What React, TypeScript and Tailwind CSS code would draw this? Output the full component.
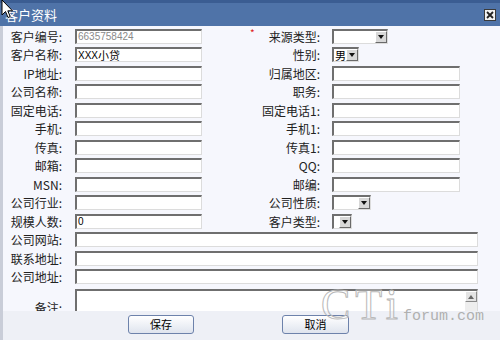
import React from "react";

const cjk = "font-['Noto_Sans_CJK_SC','Noto_Sans_CJK_JP',sans-serif]";

function Input({ className = "", children }: { className?: string; children?: React.ReactNode }) {
  return (
    <div
      className={
        "h-[15px] bg-white border-t-2 border-l-2 border-r border-b border-t-[#6f6f6f] border-l-[#6f6f6f] border-r-[#dcdcdc] border-b-[#dcdcdc] flex items-center pl-[1px] overflow-hidden " +
        className
      }
    >
      {children}
    </div>
  );
}

function Arrow() {
  return (
    <div className="h-[12px] w-[12px] bg-[#d8d8d8] border border-t-white border-l-white border-r-[#6a6a6a] border-b-[#6a6a6a] flex items-center justify-center">
      <svg width="6" height="4" viewBox="0 0 6 4">
        <path d="M0 0 H6 L3 4 Z" fill="#111" />
      </svg>
    </div>
  );
}

function Select({ className = "", children }: { className?: string; children?: React.ReactNode }) {
  return (
    <div
      className={
        "h-[15px] bg-white border-t-2 border-l-2 border-r border-b border-t-[#6f6f6f] border-l-[#6f6f6f] border-r-[#dcdcdc] border-b-[#dcdcdc] flex items-center justify-between " +
        className
      }
    >
      <span className="text-[11px] leading-[11px] pl-[1px] text-black">{children}</span>
      <Arrow />
    </div>
  );
}

function Label({ className = "", children }: { className?: string; children: React.ReactNode }) {
  return <div className={"text-right text-[12px] leading-[15px] text-[#222] whitespace-nowrap " + className}>{children}</div>;
}

function Row({
  l,
  lf,
  r,
  rf,
  star,
}: {
  l: string;
  lf: React.ReactNode;
  r: string;
  rf: React.ReactNode;
  star?: boolean;
}) {
  return (
    <div className="flex h-[18.5px] items-center">
      <Label className="w-[59px]">{l}</Label>
      <div className="ml-[13px] w-[127px]">{lf}</div>
      <div className="relative w-[118px]">
        {star && <span className="absolute left-[48px] top-[-2px] text-[10px] leading-[12px] text-[#e02020]">*</span>}
        <Label>{r}</Label>
      </div>
      <div className="ml-[12px]">{rf}</div>
    </div>
  );
}

function FullRow({ l }: { l: string }) {
  return (
    <div className="flex h-[18.5px] items-center">
      <Label className="w-[59px]">{l}</Label>
      <div className="ml-[13px]">
        <Input className="w-[403px]" />
      </div>
    </div>
  );
}

const val = "text-[10px] leading-[11px] font-['Liberation_Sans',sans-serif]";

export default function App() {
  return (
    <div className={"relative w-[500px] h-[340px] overflow-hidden bg-[#f6f7fd] flex flex-col " + cjk}>
      {/* title bar */}
      <div className="h-[26px] shrink-0 bg-[#4f73a8] border-t-[3px] border-t-[#3b5d92] flex items-center justify-between pl-[5px] pr-[4px]">
        <span className="text-white text-[13px] leading-[15px]">客户资料</span>
        <div className="w-[12px] h-[12px] bg-[#f2f2f2] border border-[#3a3a3a] flex items-center justify-center">
          <svg width="8" height="8" viewBox="0 0 8 8">
            <path d="M1 1 L7 7 M7 1 L1 7" stroke="#222" strokeWidth="1.8" />
          </svg>
        </div>
      </div>

      {/* body */}
      <div className="h-[285px] shrink-0 overflow-hidden border-l-[3px] border-l-[#c9cdd8] pt-[1px]">
        <Row
          l="客户编号:"
          lf={
            <Input className="w-[127px]">
              <span className={val + " text-[#8a8a8a]"}>6635758424</span>
            </Input>
          }
          r="来源类型:"
          star
          rf={<Select className="w-[56px]" />}
        />
        <Row
          l="客户名称:"
          lf={
            <Input className="w-[127px]">
              <span className={val + " text-black"}>XXX</span>
              <span className="text-[11px] leading-[11px] text-black">小贷</span>
            </Input>
          }
          r="性别:"
          rf={<Select className="w-[27px]">男</Select>}
        />
        <Row l="IP地址:" lf={<Input className="w-[127px]" />} r="归属地区:" rf={<Input className="w-[128px]" />} />
        <Row l="公司名称:" lf={<Input className="w-[127px]" />} r="职务:" rf={<Input className="w-[128px]" />} />
        <Row l="固定电话:" lf={<Input className="w-[127px]" />} r="固定电话1:" rf={<Input className="w-[128px]" />} />
        <Row l="手机:" lf={<Input className="w-[127px]" />} r="手机1:" rf={<Input className="w-[128px]" />} />
        <Row l="传真:" lf={<Input className="w-[127px]" />} r="传真1:" rf={<Input className="w-[128px]" />} />
        <Row l="邮箱:" lf={<Input className="w-[127px]" />} r="QQ:" rf={<Input className="w-[128px]" />} />
        <Row l="MSN:" lf={<Input className="w-[127px]" />} r="邮编:" rf={<Input className="w-[128px]" />} />
        <Row l="公司行业:" lf={<Input className="w-[127px]" />} r="公司性质:" rf={<Select className="w-[39px]" />} />
        <Row
          l="规模人数:"
          lf={
            <Input className="w-[127px]">
              <span className={val + " text-black"}>0</span>
            </Input>
          }
          r="客户类型:"
          rf={<Select className="w-[20px]" />}
        />
        <FullRow l="公司网站:" />
        <FullRow l="联系地址:" />
        <FullRow l="公司地址:" />
        <div className="flex items-start mt-[3px]">
          <Label className="w-[59px] pt-[11px]">备注:</Label>
          <div className="ml-[13px] w-[403px] h-[44px] bg-white border-t-2 border-l-2 border-r border-b border-t-[#6f6f6f] border-l-[#6f6f6f] border-r-[#dcdcdc] border-b-[#dcdcdc] flex justify-end">
            <div className="w-[12px] h-full bg-[#eeeeee]">
              <div className="h-[11px] w-[12px] bg-[#e4e4e4] border border-t-white border-l-white border-r-[#8a8a8a] border-b-[#8a8a8a] flex items-center justify-center">
                <svg width="6" height="4" viewBox="0 0 6 4">
                  <path d="M0 4 H6 L3 0 Z" fill="#666" />
                </svg>
              </div>
            </div>
          </div>
        </div>
      </div>

      {/* footer */}
      <div className="flex-1 bg-[#eef0f6] border-l-[3px] border-l-[#c9cdd8] flex items-start pt-[4px] pl-[125px] gap-[88px]">
        <button className="w-[66px] h-[19px] rounded-[3px] border border-[#6d82ab] bg-gradient-to-b from-white to-[#dfe4ee] text-[11px] leading-[13px] text-black">
          保存
        </button>
        <button className="w-[67px] h-[19px] rounded-[3px] border border-[#6d82ab] bg-gradient-to-b from-white to-[#dfe4ee] text-[11px] leading-[13px] text-black">
          取消
        </button>
      </div>

      {/* watermark */}
      <div className="absolute left-[321px] top-[283px] flex items-end pointer-events-none">
        <span className="font-['Liberation_Serif',serif] text-[44px] leading-[44px] text-transparent [-webkit-text-stroke:1px_#b8b8b8] tracking-[5px]">
          CTi
        </span>
        <span className="font-['Liberation_Mono',monospace] text-[15px] leading-[15px] text-[#b0b0b0] mb-[3px]">
          forum.com
        </span>
      </div>

      {/* cursor */}
      <svg className="absolute left-[1px] top-[-1px]" width="13" height="21" viewBox="0 0 13 21">
        <path d="M1 1 L1 16 L4.5 12.5 L7 18.5 L9.2 17.6 L6.8 11.8 L11.5 11.8 Z" fill="white" stroke="black" strokeWidth="1" />
      </svg>
    </div>
  );
}
